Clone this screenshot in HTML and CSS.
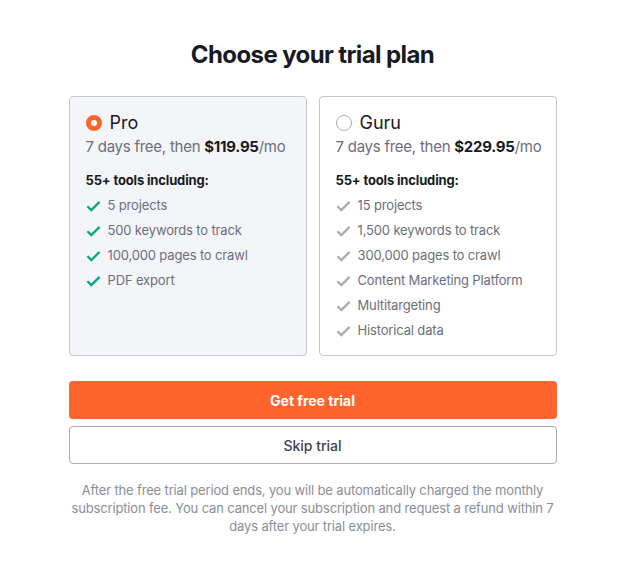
FILE: index.html
```
<!DOCTYPE html>
<html lang="en">
<head>
    <meta charset="UTF-8">
    <meta name="viewport" content="width=device-width, initial-scale=1.0">
    <title>Choose your trial plan</title>
    <link rel="stylesheet" href="styles.css">
</head>
<body>
    <div class="wrap">
        <h1>Choose your trial plan</h1>

        <div class="plans">
            <div class="plan selected">
                <div class="plan-head">
                    <span class="radio"></span>
                    <span class="plan-name">Pro</span>
                </div>
                <p class="price">7 days free, then <b>$119.95</b>/mo</p>
                <p class="tools">55+ tools including:</p>
                <ul>
                    <li><svg class="check" viewBox="0 0 16 12"><path d="M1.5 6.2l4.2 4.2L14.5 1.6"/></svg>5 projects</li>
                    <li><svg class="check" viewBox="0 0 16 12"><path d="M1.5 6.2l4.2 4.2L14.5 1.6"/></svg>500 keywords to track</li>
                    <li><svg class="check" viewBox="0 0 16 12"><path d="M1.5 6.2l4.2 4.2L14.5 1.6"/></svg>100,000 pages to crawl</li>
                    <li><svg class="check" viewBox="0 0 16 12"><path d="M1.5 6.2l4.2 4.2L14.5 1.6"/></svg>PDF export</li>
                </ul>
            </div>

            <div class="plan">
                <div class="plan-head">
                    <span class="radio"></span>
                    <span class="plan-name">Guru</span>
                </div>
                <p class="price">7 days free, then <b>$229.95</b>/mo</p>
                <p class="tools">55+ tools including:</p>
                <ul>
                    <li><svg class="check" viewBox="0 0 16 12"><path d="M1.5 6.2l4.2 4.2L14.5 1.6"/></svg>15 projects</li>
                    <li><svg class="check" viewBox="0 0 16 12"><path d="M1.5 6.2l4.2 4.2L14.5 1.6"/></svg>1,500 keywords to track</li>
                    <li><svg class="check" viewBox="0 0 16 12"><path d="M1.5 6.2l4.2 4.2L14.5 1.6"/></svg>300,000 pages to crawl</li>
                    <li><svg class="check" viewBox="0 0 16 12"><path d="M1.5 6.2l4.2 4.2L14.5 1.6"/></svg>Content Marketing Platform</li>
                    <li><svg class="check" viewBox="0 0 16 12"><path d="M1.5 6.2l4.2 4.2L14.5 1.6"/></svg>Multitargeting</li>
                    <li><svg class="check" viewBox="0 0 16 12"><path d="M1.5 6.2l4.2 4.2L14.5 1.6"/></svg>Historical data</li>
                </ul>
            </div>
        </div>

        <button class="btn btn-primary">Get free trial</button>
        <button class="btn btn-secondary">Skip trial</button>

        <p class="note">After the free trial period ends, you will be automatically charged the monthly subscription fee. You can cancel your subscription and request a refund within 7 days after your trial expires.</p>
    </div>
</body>
</html>
```

FILE: styles.css
```
body {
    margin: 0;
    background: #ffffff;
    font-family: Inter, "Noto Sans", Arial, sans-serif;
    color: #171a22;
}
.wrap {
    width: 488px;
    margin: 0 auto;
    padding-top: 40px;
}
h1 {
    margin: 0 0 26px;
    font-size: 24px;
    line-height: 30px;
    font-weight: 700;
    text-align: center;
    letter-spacing: -0.6px;
}
.plans {
    display: grid;
    grid-template-columns: 1fr 1fr;
    gap: 12px;
    margin-bottom: 25px;
}
.plan {
    border: 1px solid #c4c7cf;
    border-radius: 4px;
    padding: 15px 12px 12px 16px;
    background: #ffffff;
}
.plan.selected {
    background: #f4f5f9;
}
.plan-head {
    display: flex;
    align-items: center;
    gap: 8px;
    height: 22px;
}
.radio {
    width: 14px;
    height: 14px;
    border: 1px solid #a9abb5;
    border-radius: 50%;
    background: #ffffff;
    box-sizing: content-box;
}
.selected .radio {
    width: 6px;
    height: 6px;
    border: 5px solid #ff642d;
}
.plan-name {
    font-size: 18px;
    line-height: 22px;
}
.price {
    margin: 3px 0 0;
    font-size: 15px;
    line-height: 20px;
    color: #6c6e79;
    letter-spacing: -0.25px;
    white-space: nowrap;
}
.price b {
    color: #171a22;
    font-weight: 700;
}
.tools {
    margin: 14px 0 4px;
    font-size: 13px;
    line-height: 18px;
    font-weight: 700;
    letter-spacing: -0.15px;
}
ul {
    list-style: none;
    margin: 0;
    padding: 0;
}
li {
    display: flex;
    align-items: center;
    gap: 7px;
    font-size: 13px;
    line-height: 25px;
    color: #6c6e79;
    letter-spacing: -0.15px;
}
.check {
    width: 15px;
    height: 12px;
    fill: none;
    stroke: #a9abb5;
    stroke-width: 2.4;
    flex: none;
}
.selected .check {
    stroke: #00a97f;
}
.btn {
    display: block;
    width: 100%;
    height: 38px;
    border-radius: 4px;
    font-family: inherit;
    font-size: 14px;
    cursor: pointer;
}
.btn-primary {
    background: #ff642d;
    border: none;
    color: #ffffff;
    font-weight: 700;
    margin-bottom: 7px;
}
.btn-secondary {
    background: #ffffff;
    border: 1px solid #a9abb5;
    color: #40434d;
    font-weight: 500;
}
.note {
    margin: 17px 0 0;
    font-size: 13px;
    line-height: 18px;
    text-align: center;
    color: #8b8e9a;
    letter-spacing: -0.15px;
}
```
